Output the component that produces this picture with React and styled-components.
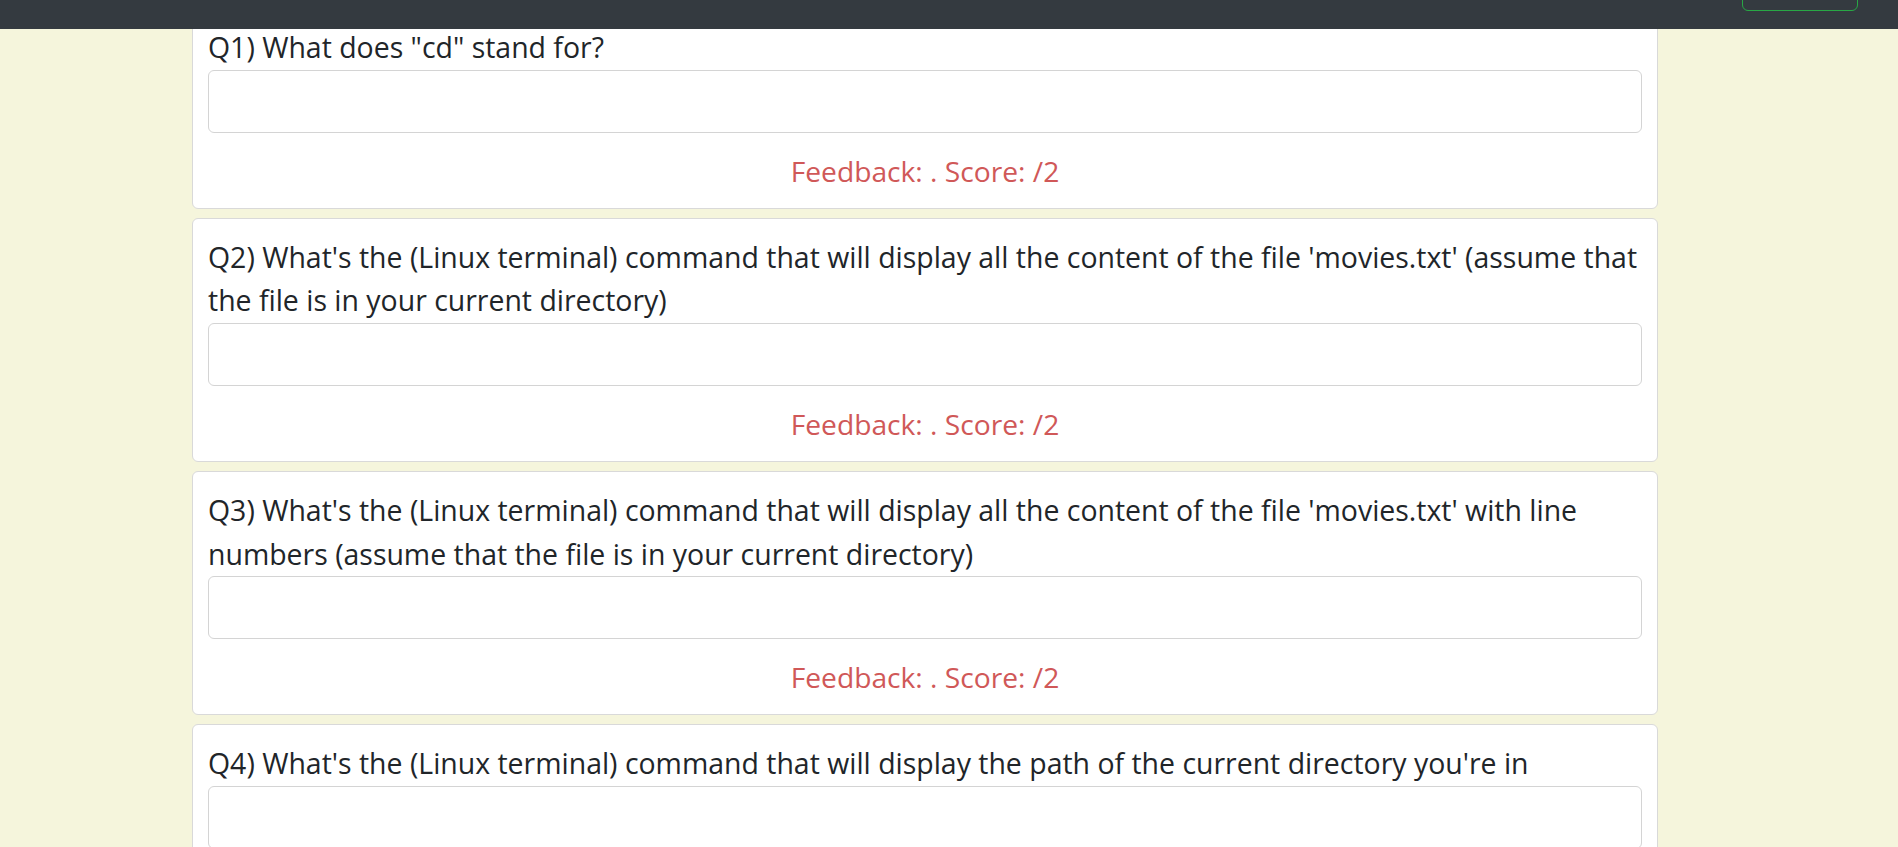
import React from "react";
import styled, { createGlobalStyle } from "styled-components";

const GlobalStyle = createGlobalStyle`
  *, *::before, *::after { box-sizing: border-box; }
  html, body { margin: 0; padding: 0; }
  body {
    background: #f5f5dc;
    color: #212529;
    font-family: "Open Sans", "Noto Sans", sans-serif;
    overflow: hidden;
  }
`;

const NavBar = styled.nav`
  position: fixed;
  top: 0;
  left: 0;
  right: 0;
  height: 29px;
  background: #343a40;
  display: flex;
  justify-content: flex-end;
  align-items: flex-end;
  padding-right: 40px;
  overflow: hidden;
  z-index: 10;
`;

const OutlineButton = styled.button`
  width: 116px;
  height: 44px;
  margin-bottom: 18px;
  border: 1px solid #28a745;
  border-radius: 6px;
  background: transparent;
  flex-shrink: 0;
`;

const Main = styled.main`
  display: flex;
  flex-direction: column;
  gap: 9px;
  padding: 8px 0 0 192px;
`;

const Card = styled.section`
  width: 1466px;
  background: #fff;
  border: 1px solid #d9d9d9;
  border-radius: 6px;
  padding: 17px 15px 14.5px;
  display: flex;
  flex-direction: column;
`;

const Question = styled.label`
  font-size: 28.45px;
  line-height: 43.6px;
  color: #212529;
`;

const AnswerInput = styled.input`
  display: block;
  width: 100%;
  height: 63px;
  margin: 0;
  border: 1px solid #d4d4d4;
  border-radius: 6px;
  background: #fff;
  font-family: inherit;
  font-size: 24px;
  padding: 0 16px;
  outline: none;
`;

const Feedback = styled.p`
  margin: 17px 0 0;
  text-align: center;
  font-size: 28.2px;
  line-height: 43.6px;
  color: #d05858;
`;

const questions = [
  'Q1) What does "cd" stand for?',
  "Q2) What's the (Linux terminal) command that will display all the content of the file 'movies.txt' (assume that the file is in your current directory)",
  "Q3) What's the (Linux terminal) command that will display all the content of the file 'movies.txt' with line numbers (assume that the file is in your current directory)",
  "Q4) What's the (Linux terminal) command that will display the path of the current directory you're in",
];

export default function App() {
  return (
    <>
      <GlobalStyle />
      <NavBar>
        <OutlineButton aria-label="submit" />
      </NavBar>
      <Main>
        {questions.map((q, i) => (
          <Card key={i}>
            <Question htmlFor={`q${i + 1}`}>{q}</Question>
            <AnswerInput id={`q${i + 1}`} type="text" />
            <Feedback>Feedback: . Score: /2</Feedback>
          </Card>
        ))}
      </Main>
    </>
  );
}
